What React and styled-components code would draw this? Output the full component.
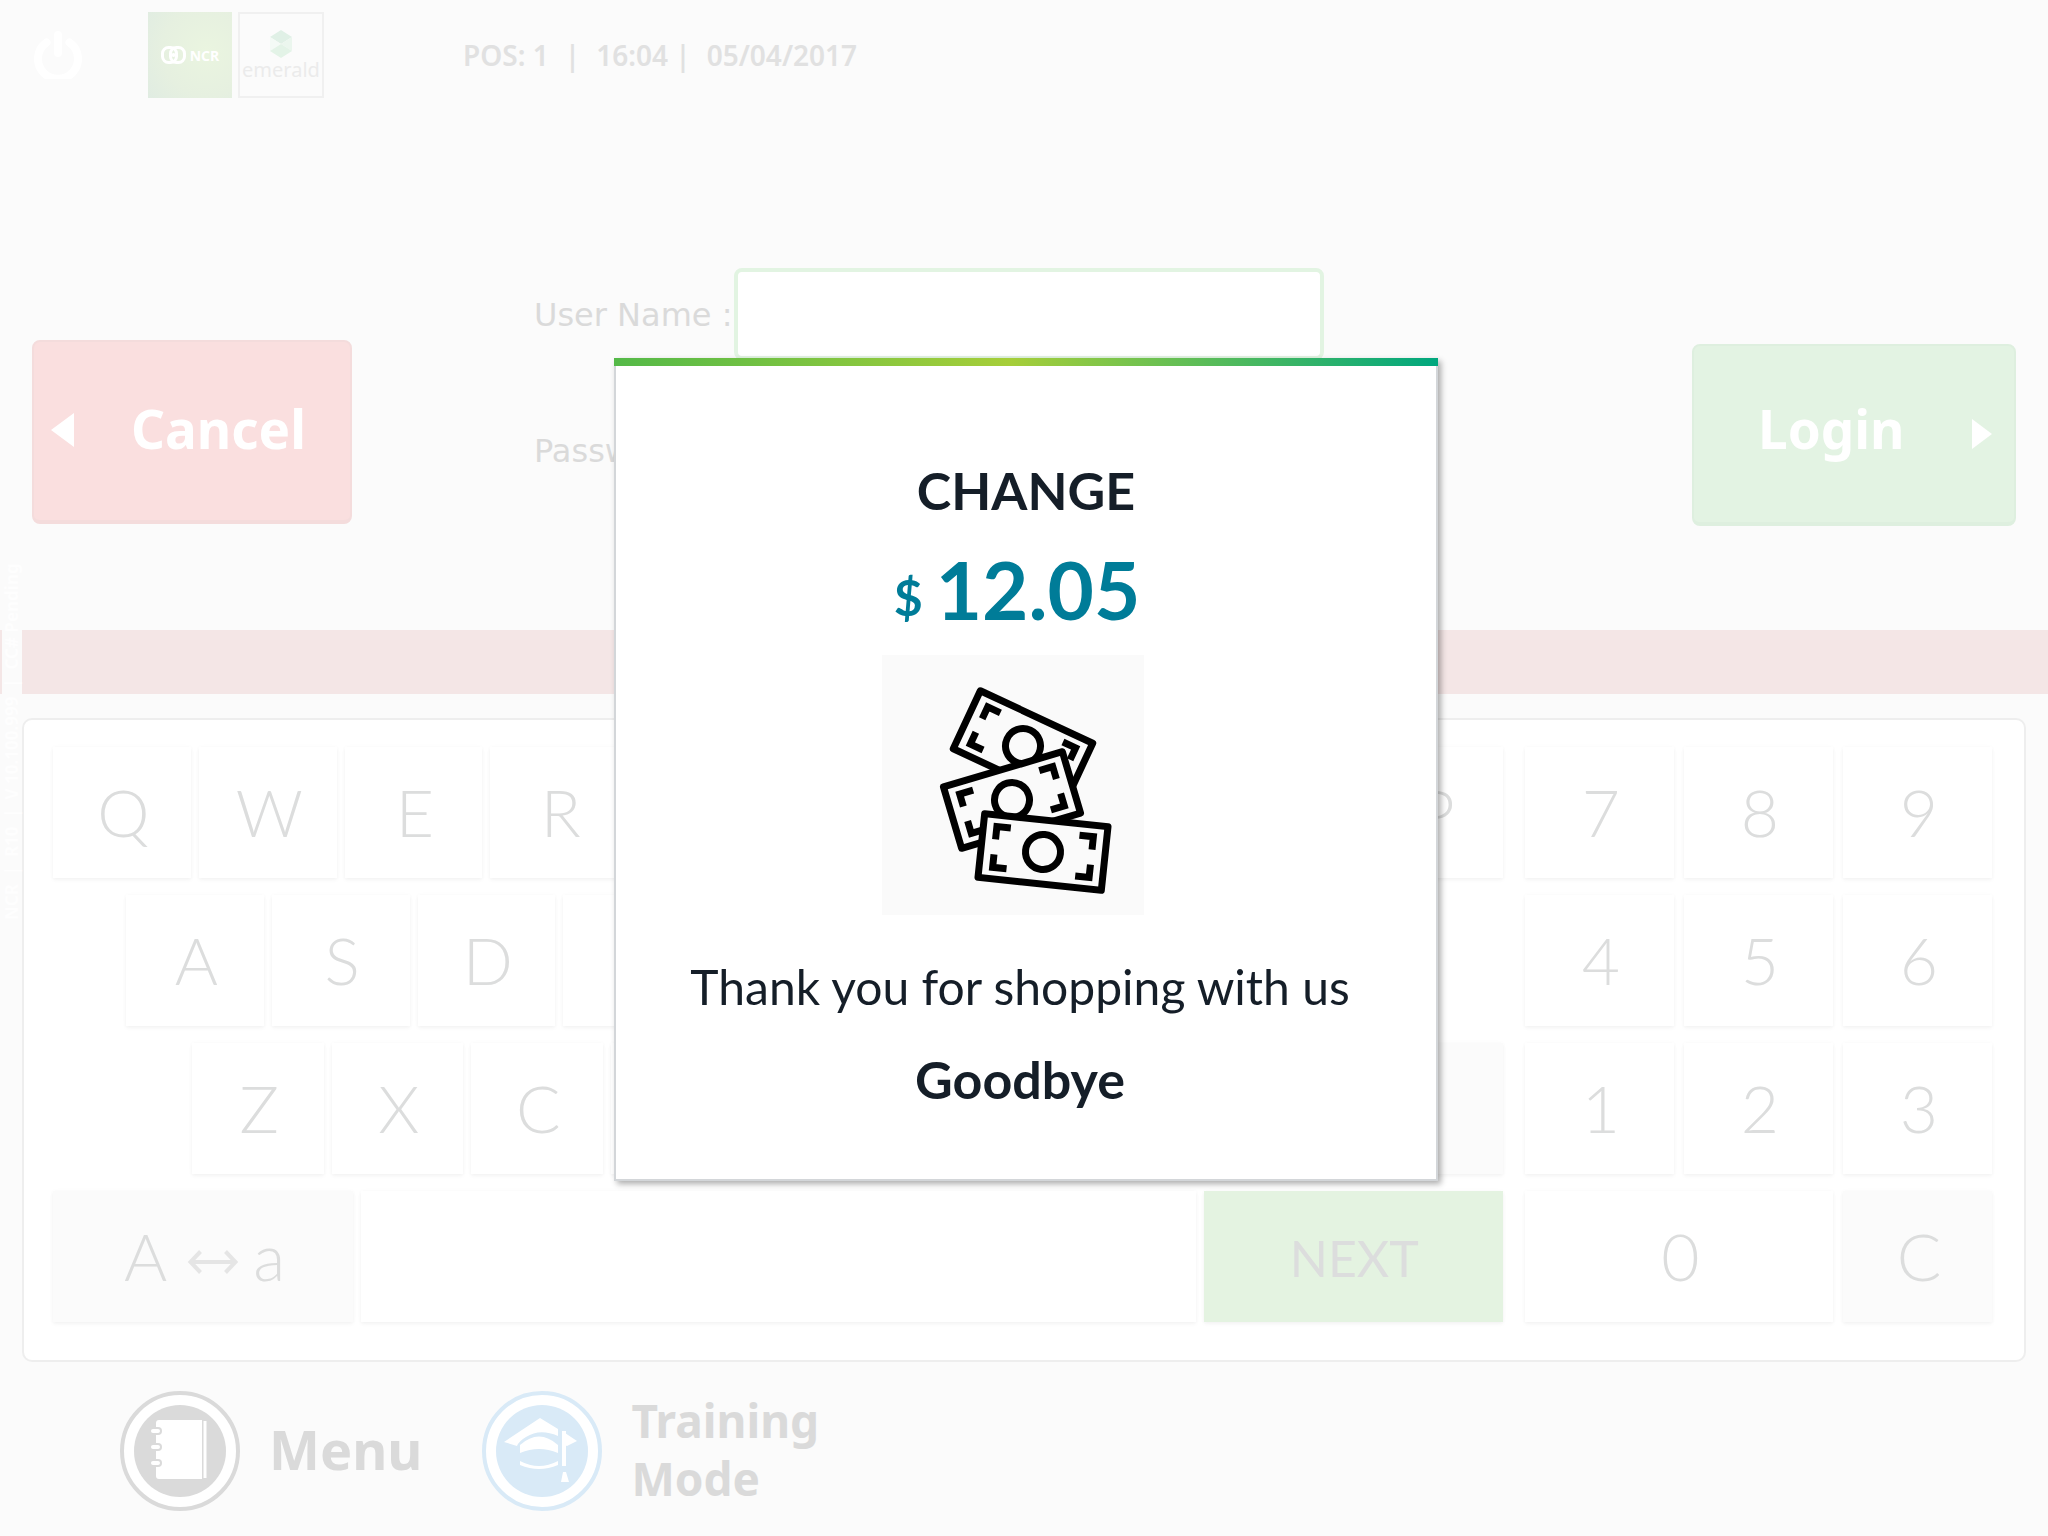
import React from "react";
import styled, { createGlobalStyle, css } from "styled-components";

const GlobalStyle = createGlobalStyle`
  *, *::before, *::after { box-sizing: border-box; }
  body { margin: 0; background: #fbfbfb; }
  button, input { font: inherit; color: inherit; margin: 0; padding: 0; border: 0; }
  button { cursor: pointer; }
`;

const ui = `"Noto Sans", "Open Sans", sans-serif`;
const lato = `Lato, "Open Sans", sans-serif`;

const Page = styled.div`
  position: relative;
  display: flex;
  flex-direction: column;
  min-height: 100vh;
  background: #fbfbfb;
  font-family: ${ui};
  overflow: hidden;
`;

/* ---------- header ---------- */

const Header = styled.header`
  display: flex;
  align-items: center;
  padding: 12px 34px 0;
`;

const PowerButton = styled.button`
  display: flex;
  background: none;
  margin-right: 66px;
`;

const Brands = styled.div`
  display: flex;
  gap: 6px;
  margin-right: 139px;
`;

const NcrTile = styled.div`
  display: flex;
  align-items: center;
  justify-content: center;
  gap: 4px;
  width: 84px;
  height: 86px;
  background: radial-gradient(circle at 70% 45%, #eaf5e0 0%, #e6f0e0 60%, #e0ece2 100%);
  color: #fff;
  font-size: 14px;
  font-weight: 700;
`;

const EmeraldTile = styled.div`
  display: flex;
  flex-direction: column;
  align-items: center;
  width: 86px;
  height: 86px;
  padding-top: 16px;
  border: 2px solid #f0f0f0;
  color: #ebebeb;
  font-size: 20px;
  line-height: 24px;
`;

const Status = styled.div`
  display: flex;
  gap: 16px;
  color: #e1e1e1;
  font-size: 28px;
  font-weight: 600;
  line-height: 40px;
`;

/* ---------- login area ---------- */

const LoginArea = styled.main`
  display: flex;
  justify-content: space-between;
  align-items: flex-start;
  margin-top: 170px;
  padding: 0 32px;
  height: 362px;
`;

const actionTones = {
  red: css`
    width: 320px;
    height: 184px;
    margin-top: 72px;
    padding: 0 44px 4px 16px;
    border-color: #f4dcdc;
    background: #fadfdf;
  `,
  green: css`
    width: 324px;
    height: 182px;
    margin-top: 76px;
    padding: 0 20px 0 64px;
    border-color: #deefdf;
    background: #e3f3e3;
  `,
};

const ActionButton = styled.button`
  display: flex;
  align-items: center;
  justify-content: space-between;
  flex: none;
  border: 2px solid;
  border-bottom-width: 4px;
  border-radius: 8px;
  ${(p) => actionTones[p.$tone]}
`;

const ActionLabel = styled.span`
  padding-bottom: ${(p) => p.$lift}px;
  color: #fff;
  font-size: 53px;
  font-weight: 700;
  line-height: 60px;
`;

const Form = styled.form`
  display: grid;
  grid-template-columns: 200px minmax(0, 590px);
  grid-auto-rows: 92px;
  row-gap: 44px;
  align-items: center;
  flex: 1;
  margin: 0 40px 0 182px;
`;

const FieldLabel = styled.label`
  padding-top: 2px;
  color: #dadada;
  font-family: "DejaVu Sans", sans-serif;
  font-size: 32px;
  white-space: nowrap;
`;

const Field = styled.input`
  width: 100%;
  height: 100%;
  padding: 0 20px;
  border: 4px solid #e2f4e2;
  border-radius: 8px;
  background: #fff;
  font-size: 32px;
  outline: none;
`;

const AlertBand = styled.div`
  height: 64px;
  background: #f4e6e6;
`;

const VersionStrip = styled.div`
  position: absolute;
  left: 2px;
  top: 552px;
  width: 20px;
  height: 368px;
  background: #fbfbfb;
  color: #fefefe;
  font-size: 17px;
  font-weight: 700;
  line-height: 20px;
  white-space: pre;
  writing-mode: vertical-rl;
  rotate: 180deg;
`;

/* ---------- keyboard ---------- */

const Keyboard = styled.section`
  display: flex;
  gap: 22px;
  margin: 24px 22px 0;
  padding: 27px 32px 38px 29px;
  border: 2px solid #eee;
  border-radius: 10px;
  background: #fff;
`;

const Letters = styled.div`
  display: flex;
  flex-direction: column;
  gap: 17px;
  flex: 1450 1 0;
  min-width: 0;
`;

const KeyRow = styled.div`
  display: flex;
  gap: 8px;
  padding-left: ${(p) => p.$start || 0}px;
  padding-right: ${(p) => p.$end || 0}px;
`;

const NumPad = styled.div`
  display: grid;
  grid-template-columns: repeat(3, 1fr);
  gap: 17px 10px;
  flex: 467 1 0;
  min-width: 0;
`;

const keyTones = {
  plain: css`
    background: #fff;
  `,
  gray: css`
    background: #fbfbfb;
  `,
  green: css`
    background: #e4f3e1;
  `,
};

const Key = styled.button`
  display: flex;
  align-items: center;
  justify-content: center;
  gap: 15px;
  flex: ${(p) => p.$grow || 1} 1 0;
  min-width: 0;
  height: 131px;
  padding: ${(p) => (p.$small ? "2px 0 0 2px" : "0 0 2px 3px")};
  box-shadow: 0 2px 4px rgba(0, 0, 0, 0.045), 0 0 5px rgba(0, 0, 0, 0.025);
  color: #dcdddd;
  font-family: ${lato};
  font-size: ${(p) => (p.$small ? 50 : 66)}px;
  font-weight: ${(p) => (p.$small ? 400 : 300)};
  line-height: 80px;
  ${(p) => keyTones[p.$tone || "plain"]}
  ${(p) => p.$wide && "grid-column: span 2;"}
`;

/* ---------- footer ---------- */

const Footer = styled.footer`
  display: flex;
  align-items: flex-start;
  gap: 60px;
  padding: 29px 120px 24px;
`;

const FooterButton = styled.button`
  display: flex;
  align-items: center;
  gap: 29px;
  background: none;
  color: #dadada;
  font-weight: 700;
  font-size: ${(p) => (p.$small ? 46 : 54)}px;
  line-height: 58px;
  text-align: left;
`;

const FooterLabel = styled.span`
  padding-bottom: 4px;
`;

/* ---------- dialog ---------- */

const Overlay = styled.div`
  position: fixed;
  inset: 0;
  display: flex;
  align-items: center;
  justify-content: center;
  padding: 2px 0 0 4px;
`;

const Dialog = styled.div`
  display: flex;
  flex-direction: column;
  align-items: center;
  width: 824px;
  padding-bottom: 68px;
  border: 2px solid #d3d6d9;
  border-top: 0;
  background: #fff;
  box-shadow: 3px 3px 6px rgba(0, 0, 0, 0.32);
  color: #151e28;
  font-family: ${lato};
`;

const Ribbon = styled.div`
  align-self: stretch;
  height: 8px;
  margin: 0 -2px 92px;
  background: linear-gradient(90deg, #54b948 0%, #a6ce39 48%, #00a77e 100%);
`;

const Title = styled.h1`
  margin: 0;
  font-size: 52px;
  font-weight: 700;
  line-height: 64px;
`;

const Amount = styled.div`
  display: flex;
  align-items: center;
  gap: 13px;
  margin: 19px 18px 18px 0;
  color: #007c98;
  font-size: 80px;
  font-weight: 700;
  line-height: 96px;
`;

const Currency = styled.span`
  padding-top: 16px;
  font-size: 50px;
  line-height: 80px;
`;

const Picture = styled.div`
  display: flex;
  width: 262px;
  height: 260px;
  margin-right: 26px;
  background: #fafafa;
`;

const Message = styled.p`
  margin: 40px 12px 0 0;
  font-size: 48px;
  line-height: 64px;
`;

const Farewell = styled.p`
  margin: 28px 12px 0 0;
  font-size: 52px;
  font-weight: 700;
  line-height: 64px;
`;

/* ---------- drawings ---------- */

const PowerIcon = () => (
  <svg width="48" height="48" viewBox="0 0 48 48" fill="none" stroke="#fff" strokeWidth="8" strokeLinecap="round">
    <path d="M12.5 11.5a20 20 0 1 0 23 0" />
    <path d="M24 4v18" />
  </svg>
);

const NcrIcon = () => (
  <svg width="25" height="18" viewBox="0 0 25 18" fill="none" stroke="#fff" strokeWidth="3">
    <rect x="1.500" y="1.500" width="14" height="15" rx="6" />
    <rect x="9.500" y="1.500" width="14" height="15" rx="6" />
    <circle cx="12.500" cy="9" r="2" fill="#fff" stroke="none" />
  </svg>
);

const EmeraldIcon = () => (
  <svg width="24" height="28" viewBox="0 0 24 28">
    <path d="M12 0l11 7-11 7L1 7z" fill="#e0f0e6" />
    <path d="M1 7l11 7-11 7z" fill="#f4faf6" />
    <path d="M23 7L12 14l11 7z" fill="#ebf6ee" />
    <path d="M12 14l11 7-11 7-11-7z" fill="#e3f3e7" />
  </svg>
);

const ArrowIcon = ({ left }) => (
  <svg width="24" height="36" viewBox="0 0 24 36" fill="#fff">
    <path d={left ? "M24 2v34L1 19z" : "M2 3v30l20-15z"} />
  </svg>
);

const SwapIcon = () => (
  <svg width="56" height="36" viewBox="-6 -12 56 36" fill="none" stroke="#e5e5e5" strokeWidth="4">
    <path d="M2 12h46M12.500 1.500L2.500 12l10 10.500M37.500 1.500l10 10.500-10 10.500" />
  </svg>
);

const MenuIcon = () => (
  <svg width="120" height="120" viewBox="0 0 120 120">
    <circle cx="60" cy="60" r="58" fill="#fff" stroke="#dadada" strokeWidth="4" />
    <circle cx="60" cy="60" r="46" fill="#dadada" />
    <path d="M39 29h43v59H39q-3 0-3-3V32q0-3 3-3z" fill="#fff" />
    <path d="M85 30v57" stroke="#fff" strokeWidth="3" />
    {[40, 56, 72].map((y) => (
      <g key={y}>
        <rect x="32" y={y - 4} width="10" height="8" rx="4" fill="#dadada" />
        <rect x="31" y={y - 2} width="9" height="4" rx="2" fill="#fff" />
      </g>
    ))}
  </svg>
);

const TrainingIcon = () => (
  <svg width="120" height="120" viewBox="0 0 120 120">
    <circle cx="60" cy="60" r="58" fill="#fff" stroke="#d9eaf7" strokeWidth="4" />
    <circle cx="60" cy="60" r="46" fill="#d9eaf7" />
    <path d="M58 27l18 11v7q-18-8-32 1-7 4-9 9L22 51z" fill="#fff" />
    <path d="M80 40l15 10-10 5-5-2z" fill="#fff" />
    <path d="M38 54q19-17 38 0v8q-19-8-38 0z" fill="#fff" />
    <path d="M38 70q19 10 38 0v4q-19 8-38 0z" fill="#fff" />
    <path d="M80 40h4v35h-4zM81 81h3l3 10h-8z" fill="#fff" />
  </svg>
);

const Bill = ({ transform }) => (
  <g transform={transform} fill="#fafafa" stroke="#000" strokeWidth="7">
    <rect x="-62" y="-32" width="124" height="64" strokeLinejoin="round" />
    <circle r="17.500" />
    <path
      fill="none"
      d="M-48.500-7.500v-13h14M48.500-7.500v-13h-14M-48.500 7.500v13h14M48.500 7.500v13h-14"
    />
  </g>
);

const CashIcon = () => (
  <svg width="262" height="260" viewBox="0 0 262 260">
    <Bill transform="translate(141 91) rotate(25)" />
    <Bill transform="translate(130 145) rotate(-16.500)" />
    <Bill transform="translate(161 197) rotate(6)" />
  </svg>
);

/* ---------- page ---------- */

/* Keys that lie under the open dialog keep their name but show no caption. */
const CharKeys = ({ chars, covered = "", grow }) =>
  chars.split("").map((c) => (
    <Key type="button" key={c} $grow={grow} aria-label={c}>
      {covered.includes(c) ? null : c}
    </Key>
  ));

export default function App() {
  return (
    <Page>
      <GlobalStyle />

      <Header>
        <PowerButton type="button" aria-label="Power">
          <PowerIcon />
        </PowerButton>
        <Brands>
          <NcrTile>
            <NcrIcon />
            NCR
          </NcrTile>
          <EmeraldTile>
            <EmeraldIcon />
            emerald
          </EmeraldTile>
        </Brands>
        <Status>
          <span>POS: 1</span>
          <span>|</span>
          <span>16:04 |</span>
          <span>05/04/2017</span>
        </Status>
      </Header>

      <LoginArea>
        <ActionButton type="button" $tone="red">
          <ArrowIcon left />
          <ActionLabel $lift={0}>Cancel</ActionLabel>
        </ActionButton>
        <Form id="login" onSubmit={(e) => e.preventDefault()}>
          <FieldLabel htmlFor="user">User Name :</FieldLabel>
          <Field id="user" type="text" autoComplete="off" />
          <FieldLabel htmlFor="password">Password :</FieldLabel>
          <Field id="password" type="password" autoComplete="off" />
        </Form>
        <ActionButton type="submit" form="login" $tone="green">
          <ActionLabel $lift={10}>Login</ActionLabel>
          <ArrowIcon />
        </ActionButton>
      </LoginArea>

      <AlertBand />
      <VersionStrip>{"NCR  |  R10  |  V 10.100.999  |  CC# Pending"}</VersionStrip>

      <Keyboard>
        <Letters>
          <KeyRow>
            <CharKeys chars="QWERTYUIOP" covered="TYUIO" />
          </KeyRow>
          <KeyRow $start={73} $end={73}>
            <CharKeys chars="ASDFGHJKL" covered="FGHJKL" />
          </KeyRow>
          <KeyRow $start={139}>
            <CharKeys chars="ZXCVBNM" covered="VBNM" grow={131} />
            <Key type="button" $grow={338} $tone="gray" aria-label="Backspace" />
          </KeyRow>
          <KeyRow>
            <Key type="button" $grow={299} $tone="gray">
              A <SwapIcon /> a
            </Key>
            <Key type="button" $grow={836} aria-label="Space" />
            <Key type="button" $grow={299} $tone="green" $small>
              NEXT
            </Key>
          </KeyRow>
        </Letters>
        <NumPad>
          <CharKeys chars="789456123" />
          <Key type="button" $wide>
            0
          </Key>
          <Key type="button" $tone="gray">
            C
          </Key>
        </NumPad>
      </Keyboard>

      <Footer>
        <FooterButton type="button">
          <MenuIcon />
          <FooterLabel>Menu</FooterLabel>
        </FooterButton>
        <FooterButton type="button" $small>
          <TrainingIcon />
          <FooterLabel>
            Training
            <br />
            Mode
          </FooterLabel>
        </FooterButton>
      </Footer>

      <Overlay>
        <Dialog role="dialog" aria-labelledby="change-title">
          <Ribbon />
          <Title id="change-title">CHANGE</Title>
          <Amount>
            <Currency>$</Currency>
            <span>12.05</span>
          </Amount>
          <Picture>
            <CashIcon />
          </Picture>
          <Message>Thank you for shopping with us</Message>
          <Farewell>Goodbye</Farewell>
        </Dialog>
      </Overlay>
    </Page>
  );
}
